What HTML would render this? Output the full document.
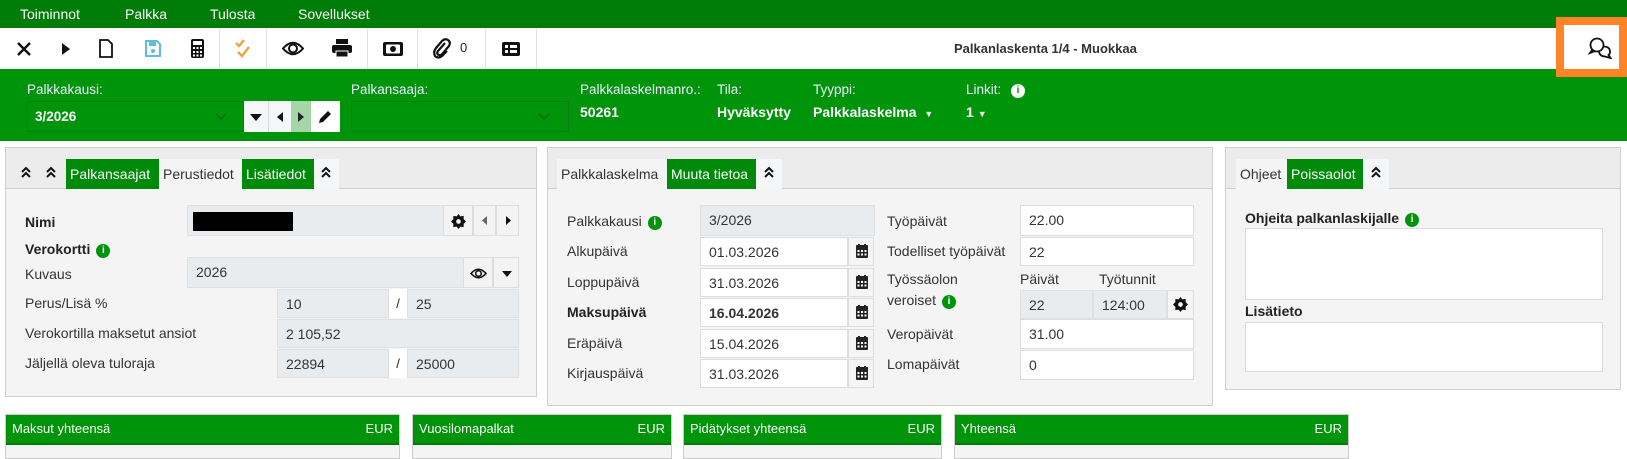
<!DOCTYPE html><html><head><meta charset="utf-8"><style>
*{box-sizing:border-box;margin:0;padding:0}
body{width:1627px;height:451px;overflow:hidden;background:#fff;font-family:"Liberation Sans",Arial,sans-serif;font-size:14px;color:#222;position:relative}
.a{position:absolute}
.menu{left:0;top:0;width:1627px;height:28px;background:#007c08;color:#fff}
.menu span{position:absolute;top:6px;font-size:14px}
.tb{left:0;top:28px;width:1627px;height:41px;background:#fff}
.sep{position:absolute;top:0;width:1px;height:41px;background:#e2e2e2}
.ic{position:absolute;top:11px}
.band{left:0;top:69px;width:1627px;height:72px;background:#00940a;color:#fff}
.lbl{position:absolute;font-size:13.5px;color:#eef}
.val{position:absolute;font-size:14px;font-weight:bold;color:#fff}
.sel{position:absolute;border:1px solid #0a7d12;height:31px}
.panel{position:absolute;background:#f4f4f4;border:1px solid #cfcfcf}
.tabs{position:absolute;left:0;top:0;right:0;height:41px;background:#ececec;border-bottom:1px solid #cfcfcf}
.tab{position:absolute;top:11px;height:30px;line-height:30px;font-size:14px;padding:0 4px;background:#f4f4f4;color:#333}
.tab.g{background:#008a0a;color:#fff}
.l{position:absolute;font-size:14px;color:#333}
.b{font-weight:bold;color:#222}
.in{position:absolute;background:#e9ecef;border:1px solid #e0e0e0;font-size:14px;padding-left:8px;line-height:28px;color:#333}
.w{background:#fff;border:1px solid #ddd}
.cal{position:absolute;width:26px;background:#f5f5f5;border:1px solid #ddd}
.info{display:inline-block;width:14px;height:14px;border-radius:50%;background:#00940a;color:#fff;font-size:10px;font-weight:bold;text-align:center;line-height:14px;vertical-align:1px;margin-left:6px}
.bp{position:absolute;top:414px;height:45px;border:1px solid #ccc;background:#f4f4f4}
.bp .h{height:30px;background:#00940a;border-bottom:2px solid #06780c;color:#fff;font-size:13px;line-height:28px;padding:0 6px;display:flex;justify-content:space-between}
.dc{position:absolute}
</style></head><body>
<svg width="0" height="0" style="position:absolute"><defs><g id="dc"><path d="M1 6L5 2L9 6M1 11L5 7L9 11" fill="none" stroke="#111" stroke-width="2"/></g>
<g id="c"><rect x="0" y="1" width="12" height="13" rx="1" fill="#222"/><rect x="2" y="0" width="2" height="3" fill="#222"/><rect x="8" y="0" width="2" height="3" fill="#222"/><g fill="#fff"><rect x="1.5" y="6" width="2" height="2"/><rect x="5" y="6" width="2" height="2"/><rect x="8.5" y="6" width="2" height="2"/><rect x="1.5" y="9.5" width="2" height="2"/><rect x="5" y="9.5" width="2" height="2"/><rect x="8.5" y="9.5" width="2" height="2"/></g></g>
<path id="gear" d="M8 0L10 2.5L13.5 2L13.5 5.5L16 8L13.5 10.5L13.5 14L10 13.5L8 16L6 13.5L2.5 14L2.5 10.5L0 8L2.5 5.5L2.5 2L6 2.5Z"/></defs></svg>
<div class="a menu"><span style="left:20px">Toiminnot</span><span style="left:125px">Palkka</span><span style="left:210px">Tulosta</span><span style="left:298px">Sovellukset</span></div>
<div class="a tb">
<svg class="ic" style="left:16px;top:13px" width="16" height="16" viewBox="0 0 16 16"><path d="M2 2L14 14M14 2L2 14" stroke="#111" stroke-width="2.4"/></svg>
<svg class="ic" style="left:62px;top:15px" width="8" height="12"><path d="M0 0L8 6L0 12Z" fill="#111"/></svg>
<svg class="ic" style="left:99px;top:11px" width="14" height="19"><path d="M1 1H9L13 5V18H1Z" fill="none" stroke="#111" stroke-width="1.8"/></svg>
<svg class="ic" style="left:145px;top:12px" width="16" height="17"><path d="M1 1H12L15 4V16H1Z" fill="none" stroke="#5bc0de" stroke-width="2"/><rect x="4" y="2" width="7" height="4" fill="#5bc0de"/><circle cx="8" cy="11" r="2" fill="#5bc0de"/></svg>
<svg class="ic" style="left:191px;top:11px" width="13" height="19"><rect width="13" height="19" rx="2" fill="#111"/><rect x="2" y="2" width="9" height="4" fill="#fff"/><g fill="#fff"><rect x="2" y="8" width="2" height="2"/><rect x="5.5" y="8" width="2" height="2"/><rect x="9" y="8" width="2" height="2"/><rect x="2" y="12" width="2" height="2"/><rect x="5.5" y="12" width="2" height="2"/><rect x="9" y="12" width="2" height="2"/><rect x="2" y="15.5" width="2" height="2"/><rect x="5.5" y="15.5" width="2" height="2"/><rect x="9" y="15.5" width="2" height="2"/></g></svg>
<div class="sep" style="left:219px"></div>
<svg class="ic" style="left:235px;top:11px" width="16" height="20"><path d="M1 4L4 7L9 1M3 13L7 17L14 8" stroke="#f0a040" stroke-width="2.4" fill="none"/></svg>
<div class="sep" style="left:266px"></div>
<svg class="ic" style="left:282px;top:13px" width="22" height="15"><path d="M1 7.5Q11 -4 21 7.5Q11 19 1 7.5Z" fill="none" stroke="#111" stroke-width="2"/><circle cx="11" cy="7.5" r="4" fill="none" stroke="#111" stroke-width="2"/></svg>
<svg class="ic" style="left:332px;top:11px" width="20" height="19"><rect x="4" y="0" width="12" height="5" fill="#111"/><rect x="0" y="6" width="20" height="8" rx="2" fill="#111"/><rect x="4" y="12" width="12" height="6" fill="#111" stroke="#fff" stroke-width="1"/></svg>
<div class="sep" style="left:367px"></div>
<svg class="ic" style="left:382px;top:13px" width="22" height="16"><rect x="1" y="1" width="20" height="14" rx="2" fill="#111"/><rect x="4" y="3.5" width="14" height="9" rx="1" fill="#fff"/><circle cx="11" cy="8" r="3" fill="#111"/></svg>
<div class="sep" style="left:417px"></div>
<svg class="ic" style="left:433px;top:10px" width="18" height="21"><path d="M12 5L5 13Q3 16 6 17Q8 18 10 15L16 8Q18 4 15 2Q12 0 9 3L3 10Q0 14 2 18Q5 21 9 18L14 13" fill="none" stroke="#111" stroke-width="2.2"/></svg>
<span class="a" style="left:460px;top:12px;font-size:13px">0</span>
<div class="sep" style="left:485px"></div>
<svg class="ic" style="left:502px;top:14px" width="18" height="14"><rect width="18" height="14" rx="2" fill="#111"/><g fill="#fff"><rect x="3" y="3" width="3" height="3"/><rect x="8" y="3" width="7" height="3"/><rect x="3" y="8" width="3" height="3"/><rect x="8" y="8" width="7" height="3"/></g></svg>
<div class="sep" style="left:536px"></div>
<span class="a" style="left:954px;top:13px;font-size:13px;font-weight:bold;color:#333">Palkanlaskenta 1/4 - Muokkaa</span>
</div>
<div class="a band">
<span class="lbl" style="left:27px;top:13px">Palkkakausi:</span>
<div class="sel" style="left:27px;top:32px;width:217px"><span class="val" style="left:7px;top:7px;font-size:13.5px">3/2026</span><svg class="a" style="left:187px;top:11px" width="12" height="8"><path d="M1 1L6 6L11 1" stroke="#0a6a10" stroke-width="1.5" fill="none"/></svg></div>
<div class="a" style="left:244px;top:32px;width:24px;height:31px;background:#f5f6f8"><svg class="a" style="left:6px;top:13px" width="12" height="7"><path d="M0 0H12L6 7Z" fill="#111"/></svg></div>
<div class="a" style="left:268px;top:32px;width:23px;height:31px;background:#f5f6f8;border-left:1px solid #ddd"><svg class="a" style="left:8px;top:11px" width="6" height="10"><path d="M6 0V10L0 5Z" fill="#111"/></svg></div>
<div class="a" style="left:291px;top:32px;width:20px;height:31px;background:#a5d6a7"><svg class="a" style="left:7px;top:11px" width="6" height="10"><path d="M0 0V10L6 5Z" fill="#222"/></svg></div>
<div class="a" style="left:311px;top:32px;width:29px;height:31px;background:#fff"><svg class="a" style="left:8px;top:9px" width="13" height="13"><path d="M0 13L1 9L9 1L12 4L4 12Z" fill="#111"/></svg></div>
<span class="lbl" style="left:351px;top:13px">Palkansaaja:</span>
<div class="sel" style="left:351px;top:32px;width:218px"><svg class="a" style="left:186px;top:11px" width="12" height="8"><path d="M1 1L6 6L11 1" stroke="#0a6a10" stroke-width="1.5" fill="none"/></svg></div>
<span class="lbl" style="left:580px;top:13px">Palkkalaskelmanro.:</span><span class="val" style="left:580px;top:35px">50261</span>
<span class="lbl" style="left:717px;top:13px">Tila:</span><span class="val" style="left:717px;top:35px">Hyväksytty</span>
<span class="lbl" style="left:813px;top:13px">Tyyppi:</span><span class="val" style="left:813px;top:35px">Palkkalaskelma&nbsp; <span style="font-size:9px">▼</span></span>
<span class="lbl" style="left:966px;top:13px">Linkit: <span class="info" style="background:#fff;color:#00940a">i</span></span><span class="val" style="left:966px;top:35px">1 <span style="font-size:9px">▼</span></span>
</div>
<div class="a" style="left:1556px;top:17px;width:71px;height:60px;border:8px solid #ff8427;background:#fff;z-index:5;background-clip:padding-box"></div>
<div class="a" style="left:1564px;top:69px;width:55px;height:0;z-index:4"></div>
<svg class="a" style="left:1588px;top:37px;z-index:6" width="26" height="22" viewBox="0 0 26 22"><circle cx="9" cy="8" r="6.5" fill="none" stroke="#111" stroke-width="1.8"/><path d="M4.5 12.5L2 16L7 14" fill="none" stroke="#111" stroke-width="1.8"/><path d="M15.5 9.5Q22 9.5 22 15Q22 17 20.5 18L22.5 21L17 19.5Q12 19.5 11 15" fill="none" stroke="#111" stroke-width="1.8"/></svg>

<div class="panel" style="left:5px;top:147px;width:532px;height:250px">
<div class="tabs">
<svg class="dc" style="left:15px;top:18px" width="10" height="12"><use href="#dc"/></svg><svg class="dc" style="left:40px;top:18px" width="10" height="12"><use href="#dc"/></svg>
<div class="tab g" style="left:60px;width:93px">Palkansaajat</div>
<div class="tab" style="left:153px;width:83px">Perustiedot</div>
<div class="tab g" style="left:236px;width:72px">Lisätiedot</div>
<div class="tab" style="left:308px;width:25px;background:#f5f6f8"><svg class="dc" style="left:7px;top:7px" width="10" height="12"><use href="#dc"/></svg></div>
</div>
<span class="l b" style="left:19px;top:66px">Nimi</span>
<div class="in" style="left:181px;top:57px;width:332px;height:31px"></div>
<div class="a" style="left:187px;top:64px;width:100px;height:19px;background:#000"></div>
<div class="a" style="left:437px;top:57px;width:30px;height:31px;background:#f3f3f3;border:1px solid #ddd"><svg class="a" style="left:7px;top:8px" width="15" height="15" viewBox="0 0 16 16"><use href="#gear" fill="#111"/><circle cx="8" cy="8" r="2.5" fill="#f3f3f3"/></svg></div>
<div class="a" style="left:467px;top:57px;width:23px;height:31px;background:#f3f3f3;border:1px solid #ddd"><svg class="a" style="left:8px;top:10px" width="5" height="9"><path d="M5 0V9L0 4.5Z" fill="#666"/></svg></div>
<div class="a" style="left:490px;top:57px;width:23px;height:31px;background:#f3f3f3;border:1px solid #ddd"><svg class="a" style="left:9px;top:10px" width="5" height="9"><path d="M0 0V9L5 4.5Z" fill="#111"/></svg></div>
<span class="l b" style="left:19px;top:93px">Verokortti<span class="info">i</span></span>
<span class="l" style="left:19px;top:118px">Kuvaus</span>
<div class="in" style="left:181px;top:109px;width:332px;height:31px">2026</div>
<div class="a" style="left:457px;top:109px;width:30px;height:31px;background:#f3f3f3;border:1px solid #ddd"><svg class="a" style="left:6px;top:10px" width="17" height="11"><path d="M1 5.5Q8.5 -3 16 5.5Q8.5 14 1 5.5Z" fill="none" stroke="#111" stroke-width="1.6"/><circle cx="8.5" cy="5.5" r="2.8" fill="none" stroke="#111" stroke-width="1.6"/></svg></div>
<div class="a" style="left:487px;top:109px;width:26px;height:31px;background:#f3f3f3;border:1px solid #ddd"><svg class="a" style="left:8px;top:13px" width="10" height="6"><path d="M0 0H10L5 6Z" fill="#111"/></svg></div>
<span class="l" style="left:19px;top:147px">Perus/Lisä %</span>
<div class="in" style="left:271px;top:141px;width:112px;height:29px">10</div><span class="a" style="left:383px;top:141px;width:18px;height:29px;background:#fff;text-align:center;line-height:29px;font-size:13px">/</span><div class="in" style="left:401px;top:141px;width:112px;height:29px">25</div>
<span class="l" style="left:19px;top:177px">Verokortilla maksetut ansiot</span>
<div class="in" style="left:271px;top:171px;width:242px;height:29px">2 105,52</div>
<span class="l" style="left:19px;top:207px">Jäljellä oleva tuloraja</span>
<div class="in" style="left:271px;top:201px;width:112px;height:29px">22894</div><span class="a" style="left:383px;top:201px;width:18px;height:29px;background:#fff;text-align:center;line-height:29px;font-size:13px">/</span><div class="in" style="left:401px;top:201px;width:112px;height:29px">25000</div>
</div>

<div class="panel" style="left:547px;top:147px;width:666px;height:259px">
<div class="tabs">
<div class="tab" style="left:9px;width:111px">Palkkalaskelma</div>
<div class="tab g" style="left:119px;width:89px">Muuta tietoa</div>
<div class="tab" style="left:208px;width:26px;background:#f5f6f8"><svg class="dc" style="left:8px;top:7px" width="10" height="12"><use href="#dc"/></svg></div>
</div>
<span class="l" style="left:19px;top:65px">Palkkakausi<span class="info">i</span></span>
<div class="in" style="left:152px;top:57px;width:175px;height:31px">3/2026</div>
<span class="l" style="left:19px;top:95px">Alkupäivä</span><div class="in w" style="left:152px;top:89px;width:148px;height:29px">01.03.2026</div>
<span class="l" style="left:19px;top:126px">Loppupäivä</span><div class="in w" style="left:152px;top:120px;width:148px;height:29px">31.03.2026</div>
<span class="l b" style="left:19px;top:156px">Maksupäivä</span><div class="in w b" style="left:152px;top:150px;width:148px;height:29px">16.04.2026</div>
<span class="l" style="left:19px;top:187px">Eräpäivä</span><div class="in w" style="left:152px;top:181px;width:148px;height:29px">15.04.2026</div>
<span class="l" style="left:19px;top:217px">Kirjauspäivä</span><div class="in w" style="left:152px;top:211px;width:148px;height:29px">31.03.2026</div>
<div class="cal" style="left:300px;top:89px;height:29px"></div><div class="cal" style="left:300px;top:120px;height:29px"></div><div class="cal" style="left:300px;top:150px;height:29px"></div><div class="cal" style="left:300px;top:181px;height:29px"></div><div class="cal" style="left:300px;top:211px;height:29px"></div>
<svg class="a" style="left:308px;top:96px" width="12" height="140"><use href="#c"/><use href="#c" y="31"/><use href="#c" y="61"/><use href="#c" y="92"/><use href="#c" y="122"/></svg>
<span class="l" style="left:339px;top:65px">Työpäivät</span><div class="in w" style="left:472px;top:57px;width:174px;height:31px">22.00</div>
<span class="l" style="left:339px;top:95px">Todelliset työpäivät</span><div class="in w" style="left:472px;top:89px;width:174px;height:29px">22</div>
<span class="l" style="left:339px;top:123px">Työssäolon</span><span class="l" style="left:339px;top:144px">veroiset<span class="info">i</span></span>
<span class="l" style="left:472px;top:123px">Päivät</span><span class="l" style="left:551px;top:123px">Työtunnit</span>
<div class="in" style="left:472px;top:142px;width:73px;height:29px">22</div><div class="in" style="left:545px;top:142px;width:74px;height:29px">124:00</div>
<div class="a" style="left:619px;top:142px;width:27px;height:29px;background:#f5f5f5;border:1px solid #ddd"><svg class="a" style="left:5px;top:6px" width="15" height="15" viewBox="0 0 16 16"><use href="#gear" fill="#111"/><circle cx="8" cy="8" r="2.5" fill="#f5f5f5"/></svg></div>
<span class="l" style="left:339px;top:178px">Veropäivät</span><div class="in w" style="left:472px;top:171px;width:174px;height:30px">31.00</div>
<span class="l" style="left:339px;top:208px">Lomapäivät</span><div class="in w" style="left:472px;top:202px;width:174px;height:30px">0</div>
</div>

<div class="panel" style="left:1225px;top:147px;width:396px;height:243px">
<div class="tabs">
<div class="tab" style="left:10px;width:52px">Ohjeet</div>
<div class="tab g" style="left:61px;width:76px">Poissaolot</div>
<div class="tab" style="left:137px;width:26px;background:#f5f6f8"><svg class="dc" style="left:8px;top:7px" width="10" height="12"><use href="#dc"/></svg></div>
</div>
<span class="l b" style="left:19px;top:62px">Ohjeita palkanlaskijalle<span class="info">i</span></span>
<div class="a" style="left:19px;top:80px;width:358px;height:72px;background:#fff;border:1px solid #ddd"></div>
<span class="l b" style="left:19px;top:155px">Lisätieto</span>
<div class="a" style="left:19px;top:174px;width:358px;height:50px;background:#fff;border:1px solid #ddd"></div>
</div>

<div class="bp" style="left:5px;width:395px"><div class="h"><span>Maksut yhteensä</span><span>EUR</span></div></div>
<div class="bp" style="left:412px;width:260px"><div class="h"><span>Vuosilomapalkat</span><span>EUR</span></div></div>
<div class="bp" style="left:683px;width:259px"><div class="h"><span>Pidätykset yhteensä</span><span>EUR</span></div></div>
<div class="bp" style="left:954px;width:395px"><div class="h"><span>Yhteensä</span><span>EUR</span></div></div>
</body></html>
